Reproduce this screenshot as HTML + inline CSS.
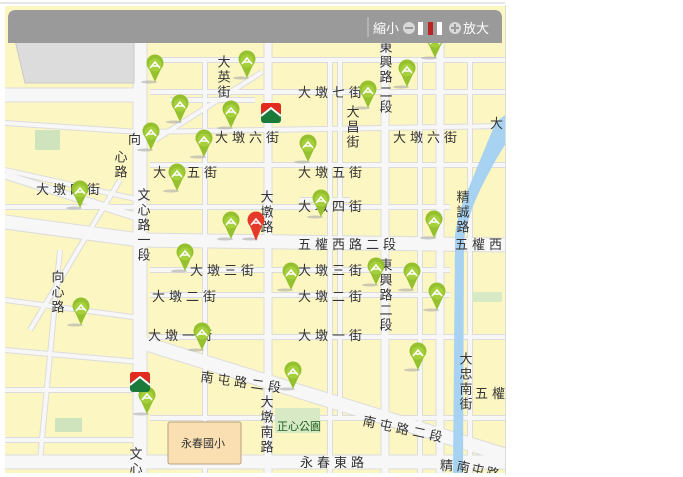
<!DOCTYPE html>
<html><head><meta charset="utf-8"><style>
html,body{margin:0;padding:0;background:#fff;width:683px;height:477px;overflow:hidden}
svg{position:absolute;left:0;top:0}
text{font-family:"Liberation Sans","Noto Sans CJK TC",sans-serif;font-size:13px;fill:#333}
</style></head><body>
<svg width="683" height="477" viewBox="0 0 683 477">
<defs>
<clipPath id="c"><rect x="5" y="6" width="500" height="467"/></clipPath>
<g id="gp"><ellipse cx="-6" cy="0" rx="8" ry="1.5" fill="#aaa" opacity=".6"/><path d="M0 0 L-6 -13 A8.5 8.5 0 1 1 6 -13 Z" fill="#96c12f"/><circle cx="0" cy="-17" r="6.5" fill="#a6cf3c"/><path d="M-5 -14 L0 -20 L5 -14 M-3 -16 L3 -16" stroke="#fff" stroke-width="1.6" fill="none"/></g>
<g id="rp"><ellipse cx="-6" cy="0" rx="8" ry="1.5" fill="#aaa" opacity=".6"/><path d="M0 2 L-6 -13 A8.5 8.5 0 1 1 6 -13 Z" fill="#e53a2a"/><path d="M-5 -14 L0 -20 L5 -14 M-3 -16 L3 -16" stroke="#fff" stroke-width="1.6" fill="none"/></g>
<g id="lg"><rect x="-10" y="-10" width="20" height="20" rx="3" fill="#1a7a3a"/><path d="M-10 -7 Q-10 -10 -7 -10 L7 -10 Q10 -10 10 -7 L10 1 L0 -6 L-10 1Z" fill="#e32a1e"/><path d="M-10 3 L0 -5 L10 3" stroke="#fff" stroke-width="2" fill="none"/></g>
</defs>
<line x1="0" y1="3" x2="505" y2="3" stroke="#ccc"/>
<g clip-path="url(#c)">
<rect x="5" y="5" width="500" height="470" fill="#fcf6c2"/>
<g stroke="#dcdcdc" stroke-linecap="butt" fill="none">
<g stroke-width="6"><path d="M150 60H505M150 92H505M5 123L140 132 505 126M150 165H505M5 207H450M150 270H450M150 295H450M150 337H505M150 418H505M205 60V475M330 60V475M420 60V475M470 60V475M5 300L140 318M5 350L140 362M5 390H140M5 440H140M155 140L262 72M120 180L30 330M5 170L140 200M170 100L255 100M340 60V420M300 200H350M60 250L40 460"/></g>
<g stroke-width="9"><path d="M268 43V475M385 43V475M440 43V475M5 175L140 218"/></g>
<g stroke-width="15"><path d="M5 222L140 240 505 245M140 43V475M140 342L505 455M5 462H505M5 95L140 95"/></g>
</g>
<g stroke="#f7f7f7" stroke-linecap="butt" fill="none">
<g stroke-width="4"><path d="M150 60H505M150 92H505M5 123L140 132 505 126M150 165H505M5 207H450M150 270H450M150 295H450M150 337H505M150 418H505M205 60V475M330 60V475M420 60V475M470 60V475M5 300L140 318M5 350L140 362M5 390H140M5 440H140M155 140L262 72M120 180L30 330M5 170L140 200M170 100L255 100M340 60V420M300 200H350M60 250L40 460"/></g>
<g stroke-width="7"><path d="M268 43V475M385 43V475M440 43V475M5 175L140 218"/></g>
<g stroke-width="13"><path d="M5 222L140 240 505 245M140 43V475M140 342L505 455M5 462H505M5 95L140 95"/></g>
</g>
<polygon points="15,40 134,40 134,83 25,83" fill="#dcdcdc" stroke="#c8c8c8"/>
<rect x="35" y="130" width="25" height="20" fill="#cfe3bc"/>
<rect x="55" y="418" width="27" height="14" fill="#cfe3bc"/>
<rect x="275" y="408" width="45" height="25" fill="#d8e9c6"/>
<rect x="472" y="292" width="30" height="10" fill="#d8e9c6"/>
<path d="M505 115 L496 122 Q484 150 470 185 Q458 210 455 235 L453 475 L463 475 L464 240 Q468 215 480 190 Q495 160 505 145Z" fill="#a8d2f2"/>
<rect x="168" y="422" width="73" height="42" rx="2" fill="#fadfb2" stroke="#b8a080"/>
<text x="181" y="447" style="font-size:11px">永春國小</text>
<text x="277" y="430" style="font-size:11px;fill:#1b5e1b">正心公園</text>
<g letter-spacing="4">
<text x="298" y="97">大墩七街</text>
<text x="215" y="142">大墩六街</text>
<text x="393" y="142">大墩六街</text>
<text x="153" y="177">大墩五街</text>
<text x="298" y="177">大墩五街</text>
<text x="36" y="194">大墩四街</text>
<text x="298" y="211">大墩四街</text>
<text x="298" y="249">五權西路二段</text>
<text x="455" y="249">五權西</text>
<text x="190" y="275">大墩三街</text>
<text x="298" y="275">大墩三街</text>
<text x="152" y="301">大墩二街</text>
<text x="298" y="301">大墩二街</text>
<text x="148" y="340">大墩一街</text>
<text x="298" y="340">大墩一街</text>
<text x="300" y="467">永春東路</text>
<text x="475" y="398">五權</text>
</g>
<text transform="translate(200,381) rotate(8)" letter-spacing="4">南屯路二段</text>
<text transform="translate(362,425) rotate(12)" letter-spacing="4">南屯路二段</text>
<text transform="translate(456,470) rotate(12)" letter-spacing="2">南屯路</text>
<g style="writing-mode:vertical-rl" letter-spacing="2">
<text x="223" y="55">大英街</text>
<text x="352" y="105">大昌街</text>
<text x="385" y="40">東興路二段</text>
<text x="385" y="258">東興路二段</text>
<text x="266" y="190">大墩路</text>
<text x="266" y="395">大墩南路</text>
<text x="143" y="188">文心路一段</text>
<text x="135" y="447">文心</text>
<text x="462" y="190">精誠路</text>
<text x="465" y="352">大忠南街</text>
<text x="57" y="270">向心路</text>
<text x="120" y="150">心路</text>
</g>
<text x="128" y="144">向</text>
<text x="440" y="470">精</text>
<text x="490" y="128">大</text>
<use href="#gp" x="155" y="82"/><use href="#gp" x="247" y="78"/><use href="#gp" x="180" y="122"/>
<use href="#gp" x="231" y="128"/><use href="#gp" x="151" y="150"/><use href="#gp" x="204" y="157"/>
<use href="#gp" x="177" y="191"/><use href="#gp" x="80" y="208"/><use href="#gp" x="308" y="162"/>
<use href="#gp" x="321" y="217"/><use href="#gp" x="231" y="239"/><use href="#gp" x="185" y="271"/>
<use href="#gp" x="291" y="290"/><use href="#gp" x="376" y="285"/><use href="#gp" x="412" y="290"/>
<use href="#gp" x="437" y="310"/><use href="#gp" x="81" y="325"/><use href="#gp" x="202" y="350"/>
<use href="#gp" x="293" y="389"/><use href="#gp" x="147" y="414"/><use href="#gp" x="418" y="370"/>
<use href="#gp" x="434" y="238"/><use href="#gp" x="407" y="87"/><use href="#gp" x="368" y="108"/>
<use href="#gp" x="435" y="58"/>
<use href="#rp" x="256" y="239"/>
<use href="#lg" x="271" y="113"/><use href="#lg" x="140" y="382"/>
</g>
<line x1="505.5" y1="5" x2="505.5" y2="475" stroke="#ddd"/>
<path d="M8 43V18Q8 10 16 10H494Q502 10 502 18V43Z" fill="#9a9a9a"/>
<line x1="368" y1="17" x2="368" y2="37" stroke="#ccc"/>
<text x="373" y="33" style="fill:#fff;font-size:13px">縮小</text>
<circle cx="409" cy="28" r="6" fill="#d8d8d8"/><rect x="405" y="27" width="8" height="2" fill="#999"/>
<rect x="418" y="22" width="5" height="13" fill="#fff"/>
<rect x="428" y="22" width="5" height="13" fill="#b22"/>
<rect x="437" y="22" width="5" height="13" fill="#fff"/>
<circle cx="455" cy="28" r="6" fill="#d8d8d8"/><rect x="451" y="27" width="8" height="2" fill="#999"/><rect x="454" y="24" width="2" height="8" fill="#999"/>
<text x="463" y="33" style="fill:#fff;font-size:13px">放大</text>
</svg>
</body></html>
